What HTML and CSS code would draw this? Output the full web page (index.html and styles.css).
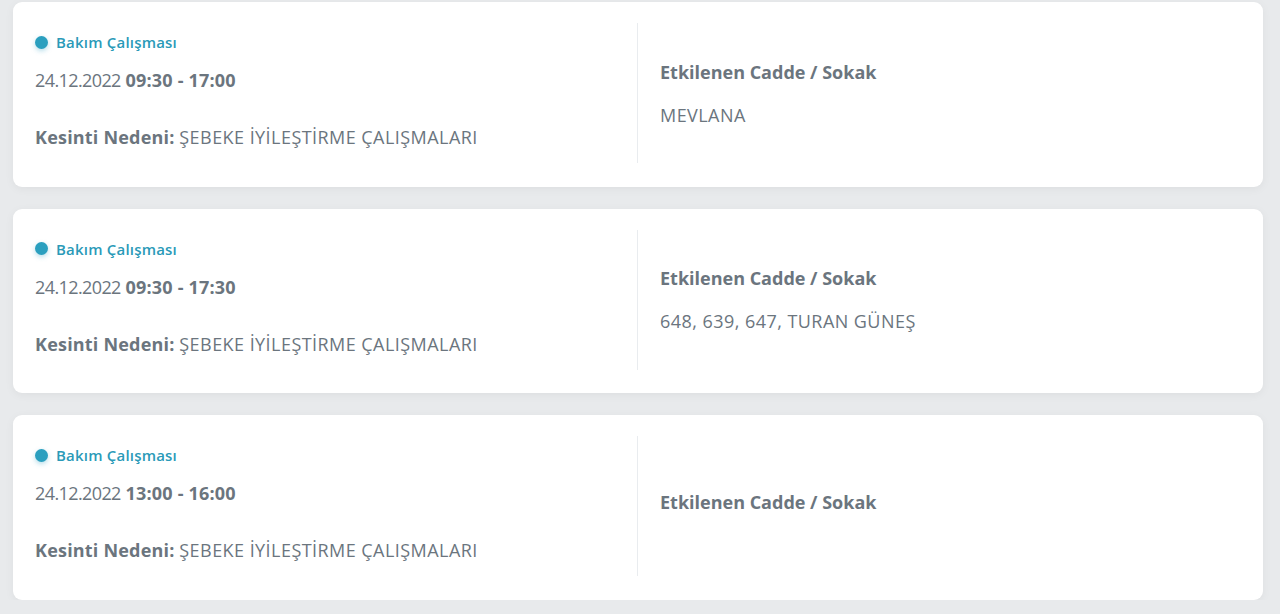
FILE: index.html
```html
<!DOCTYPE html>
<html lang="tr">
<head>
<meta charset="utf-8">
<link rel="stylesheet" href="styles.css">
</head>
<body>
<div class="list">
  <div class="card">
    <div class="left">
      <div class="tag"><span class="dot"></span>Bakım Çalışması</div>
      <div class="date"><span class="day">24.12.2022</span> <b>09:30 - 17:00</b></div>
      <div class="reason"><b>Kesinti Nedeni:</b> <span class="val">ŞEBEKE İYİLEŞTİRME ÇALIŞMALARI</span></div>
    </div>
    <div class="right">
      <div class="head">Etkilenen Cadde / Sokak</div>
      <div class="streets">MEVLANA</div>
    </div>
  </div>
  <div class="card">
    <div class="left">
      <div class="tag"><span class="dot"></span>Bakım Çalışması</div>
      <div class="date"><span class="day">24.12.2022</span> <b>09:30 - 17:30</b></div>
      <div class="reason"><b>Kesinti Nedeni:</b> <span class="val">ŞEBEKE İYİLEŞTİRME ÇALIŞMALARI</span></div>
    </div>
    <div class="right">
      <div class="head">Etkilenen Cadde / Sokak</div>
      <div class="streets">648, 639, 647, TURAN GÜNEŞ</div>
    </div>
  </div>
  <div class="card">
    <div class="left">
      <div class="tag"><span class="dot"></span>Bakım Çalışması</div>
      <div class="date"><span class="day">24.12.2022</span> <b>13:00 - 16:00</b></div>
      <div class="reason"><b>Kesinti Nedeni:</b> <span class="val">ŞEBEKE İYİLEŞTİRME ÇALIŞMALARI</span></div>
    </div>
    <div class="right">
      <div class="head">Etkilenen Cadde / Sokak</div>
    </div>
  </div>
</div>
</body>
</html>
```
FILE: styles.css
```css
html, body {
  margin: 0;
  padding: 0;
  background: #e8eaec;
}
body {
  font-family: "Open Sans", "Noto Sans", sans-serif;
  color: #6b757e;
}
.list {
  display: flex;
  flex-direction: column;
  gap: 22px;
  padding: 2px 17px 0 13px;
}
.card {
  background: #fff;
  border-radius: 9px;
  box-shadow: 0 2px 10px rgba(0, 0, 0, 0.05);
  display: flex;
  padding: 21px 22px 23.5px 22px;
  height: 140px;
}
.left {
  width: 602px;
  padding-top: 10px;
  border-right: 1px solid #e9ecef;
}
.tag {
  display: flex;
  align-items: center;
  font-size: 15px;
  font-weight: 600;
  line-height: 18px;
  letter-spacing: 0.2px;
  color: #2a9ab8;
}
.dot {
  width: 13px;
  height: 13px;
  border-radius: 50%;
  background: #2a9fbf;
  margin-right: 8px;
  box-shadow: 0 2px 5px rgba(42, 159, 191, 0.35);
}
.date {
  margin-top: 17px;
  font-size: 18px;
  line-height: 24px;
}
.day {
  letter-spacing: -0.6px;
}
.reason {
  margin-top: 33px;
  font-size: 18px;
  line-height: 24px;
}
.val {
  letter-spacing: 0.45px;
}
b {
  font-weight: 700;
  letter-spacing: 0.2px;
}
.right {
  flex: 1;
  padding-left: 22px;
  display: flex;
  flex-direction: column;
  justify-content: center;
}
.head {
  font-size: 18px;
  font-weight: 700;
  line-height: 24px;
  margin-bottom: 8px;
}
.streets {
  margin-top: 11px;
  font-size: 18px;
  line-height: 24px;
  letter-spacing: 0.45px;
}
```
